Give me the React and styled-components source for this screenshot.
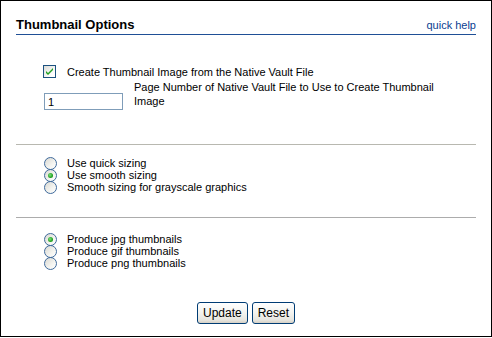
import React from "react"
import styled, { createGlobalStyle } from "styled-components"

const GlobalStyle = createGlobalStyle`
  html, body {
    margin: 0;
    padding: 0;
    background: #fff;
  }
  body {
    font-family: "Liberation Sans", Arial, sans-serif;
    font-size: 11px;
    color: #000;
  }
`

const Radio = ({ checked, label }) => (
  <RadioRow>
    <RadioCircle checked={checked} />
    <OptionText>{label}</OptionText>
  </RadioRow>
)

const App = () => {
  return (
    <>
      <GlobalStyle />
      <Frame>
        <Header>
          <Title>Thumbnail Options</Title>
          <HelpLink href="#">quick help</HelpLink>
        </Header>

        <CheckRow>
          <CheckBox>
            <svg width="11" height="11" viewBox="0 0 11 11">
              <path d="M2 5 L4 7 L9 2 L9 4 L4 9 L2 7 Z" fill="#21a121" />
            </svg>
          </CheckBox>
          <OptionText>Create Thumbnail Image from the Native Vault File</OptionText>
        </CheckRow>

        <InputRow>
          <TextField defaultValue="1" />
          <FieldLabel>
            Page Number of Native Vault File to Use to Create Thumbnail Image
          </FieldLabel>
        </InputRow>

        <Separator $top={34} />

        <RadioGroup $top={12}>
          <Radio label="Use quick sizing" />
          <Radio checked label="Use smooth sizing" />
          <Radio label="Smooth sizing for grayscale graphics" />
        </RadioGroup>

        <Separator $top={24} $color="#acacac" />

        <RadioGroup $top={15}>
          <Radio checked label="Produce jpg thumbnails" />
          <Radio label="Produce gif thumbnails" />
          <Radio label="Produce png thumbnails" />
        </RadioGroup>

        <Buttons>
          <XPButton>Update</XPButton>
          <XPButton>Reset</XPButton>
        </Buttons>
      </Frame>
    </>
  )
}

export default App

const Frame = styled.div`
  width: 492px;
  height: 337px;
  box-sizing: border-box;
  border: 1px solid #000;
  padding: 0 15px 0 15px;
  display: flex;
  flex-direction: column;
`

const Header = styled.div`
  display: flex;
  justify-content: space-between;
  align-items: baseline;
  margin-top: 16px;
  padding-bottom: 1px;
  border-bottom: 1px solid #1f4f96;
`

const Title = styled.div`
  font-size: 13px;
  font-weight: bold;
  line-height: 16px;
`

const HelpLink = styled.a`
  font-size: 11px;
  color: #0b3d91;
  text-decoration: none;
`

const CheckRow = styled.div`
  display: flex;
  align-items: center;
  margin-top: 30px;
  padding-left: 27px;
  height: 13px;
`

const CheckBox = styled.span`
  width: 11px;
  height: 11px;
  border: 1px solid #1c5180;
  background: linear-gradient(135deg, #dcdcd7 0%, #fff 80%);
  display: flex;
  align-items: center;
  justify-content: center;
  margin-right: 11px;
`

const OptionText = styled.span`
  font-size: 11px;
  line-height: 12px;
  white-space: nowrap;
`

const InputRow = styled.div`
  display: flex;
  align-items: flex-start;
  margin-top: 2px;
  padding-left: 28px;
`

const TextField = styled.input`
  width: 79px;
  height: 17px;
  box-sizing: border-box;
  border: 1px solid #7f9db9;
  margin: 13px 11px 0 0;
  padding: 0 3px;
  font-family: "Liberation Sans", Arial, sans-serif;
  font-size: 11px;
  outline: none;
`

const FieldLabel = styled.div`
  width: 330px;
  font-size: 11px;
  line-height: 14px;
`

const Separator = styled.div`
  margin-top: ${p => p.$top}px;
  height: 1px;
  background: ${p => p.$color || "#b8b8b0"};
`

const RadioGroup = styled.div`
  display: flex;
  flex-direction: column;
  margin-top: ${p => p.$top}px;
  padding-left: 28px;
`

const RadioRow = styled.label`
  display: flex;
  align-items: center;
  height: 12px;
`

const RadioCircle = styled.span`
  flex: none;
  width: 13px;
  height: 13px;
  box-sizing: border-box;
  border-radius: 50%;
  border: 1px solid #3f6a9c;
  background: linear-gradient(135deg, #d8d8d2 0%, #f4f4f0 60%, #fff 100%);
  margin-right: 10px;
  position: relative;
  &::after {
    content: "";
    display: ${p => (p.checked ? "block" : "none")};
    position: absolute;
    left: 3px;
    top: 3px;
    width: 5px;
    height: 5px;
    border-radius: 50%;
    background: radial-gradient(circle at 40% 40%, #7fe07f 0%, #21a121 60%, #1a8a1a 100%);
  }
`

const Buttons = styled.div`
  display: flex;
  justify-content: center;
  gap: 4px;
  margin-top: 33px;
`

const XPButton = styled.button`
  height: 22px;
  padding: 0 5px;
  border: 1px solid #003c74;
  border-radius: 3px;
  background: linear-gradient(180deg, #ffffff 0%, #f3f3ef 50%, #e6e5df 85%, #d6d0c5 100%);
  font-family: "Liberation Sans", Arial, sans-serif;
  font-size: 12px;
  color: #000;
  cursor: pointer;
`
